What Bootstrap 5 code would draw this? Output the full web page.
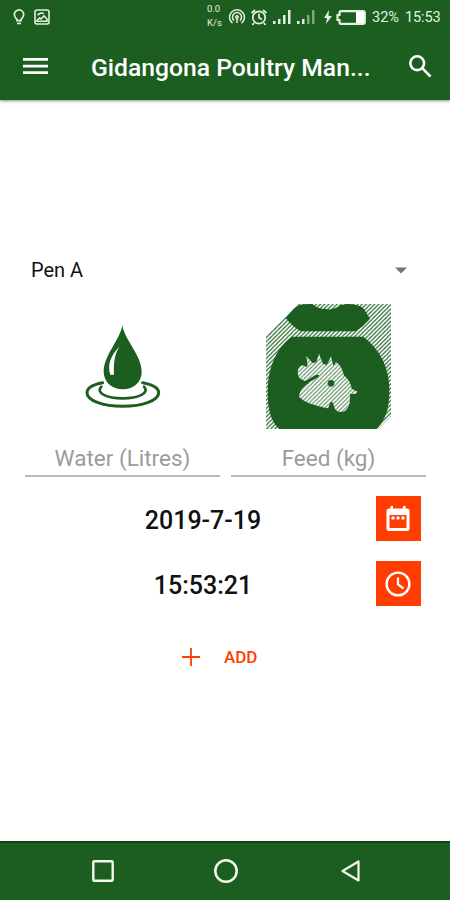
<!DOCTYPE html>
<html lang="en">
<head>
<meta charset="utf-8">
<meta name="viewport" content="width=device-width, initial-scale=1">
<title>Gidangona Poultry Manager</title>
<link href="https://cdn.jsdelivr.net/npm/bootstrap@5.3.0/dist/css/bootstrap.min.css" rel="stylesheet">
<style>
:root{--green:#1b5e20;--orange:#ff3d00}
body{font-family:Roboto,"Liberation Sans",sans-serif;background:#fff;color:#111;height:900px;overflow:hidden}
svg{display:block;flex:none}
.bg-green{background:var(--green);color:#fff}
.app-head{height:100px;box-shadow:0 1px 3px rgba(0,0,0,.45)}
.status{height:34px;padding:0 9px 0 12px;color:#e4eee2}
.speed{font-size:9.5px;line-height:14px;width:17px;height:30px;margin-right:4px}
.pct{font-size:14.5px;line-height:37px;width:28px;margin-left:6px;white-space:nowrap}
.clock{font-size:14.5px;line-height:37px;width:36px;margin-left:5px;letter-spacing:-.1px;white-space:nowrap}
.toolbar{height:66px;padding:0 17px 2px 23px}
.app-title{font-size:24.7px;font-weight:500;line-height:30px;width:300px;margin:3px 0 0 43px;white-space:nowrap}
.pen{margin-top:150px;height:40px;padding:0 43px 0 31px;font-size:20px}
.arts{height:125px;margin-top:14px}
.art-water{padding-left:5px}
.fields{gap:11px}
.field{width:195px;height:47px;margin-top:1px;border:0;border-bottom:2px solid #b9b9b9;border-radius:0;padding:11px 0 0 1px;font-size:22.5px;line-height:32px;text-align:center}
.field::placeholder{color:#9b9b9b;opacity:1}
.stamps{margin-top:19px;gap:20px}
.stamp{height:45px;padding:0 29px 0 30px}
.stamp-text{font-size:25px;font-weight:500;line-height:49px;width:346px;text-align:center}
.sq{width:45px;height:45px;border-radius:0;padding:0 2px 0 0;background:var(--orange)!important}
.add{color:var(--orange)!important;font-size:17px;font-weight:500;line-height:26px;margin:37px 0 0 181px}
.nav-foot{height:59px;border-top:2px solid #0d4511;padding:0 90px 2px 92px}
</style>
<script src="https://cdn.jsdelivr.net/npm/bootstrap@5.3.0/dist/js/bootstrap.bundle.min.js"></script>
</head>
<body class="d-flex flex-column">
<header class="app-head bg-green">
  <div class="status d-flex align-items-center">
    <svg width="14" height="18" viewBox="0 0 14 18" fill="none" stroke="currentColor" stroke-width="1.7"><path d="M5 11.500C2.800 9.500 2.300 8.500 2.300 6.600a4.700 4.700 0 0 1 9.400 0c0 1.900-.5 2.900-2.700 4.900v1.200H5zM5 15.300h4"/></svg>
    <svg class="ms-2" width="16" height="16" viewBox="0 0 16 16" fill="none" stroke="currentColor" stroke-width="1.600"><rect x="1" y="1" width="14" height="14" rx="2"/><path d="M3 12.200h10V10L10 7l-3 3-1.500-1L3 11.500zM3.500 6L6.500 4 10 4.500"/></svg>
    <div class="speed ms-auto">0.0<br>K/s</div>
    <svg width="18" height="18" viewBox="0 0 18 18" fill="none" stroke="currentColor" stroke-width="1.500"><path d="M4.500 15.200a7.500 7.500 0 1 1 9 0M6.200 12.500a4.500 4.500 0 1 1 5.600 0"/><circle cx="9" cy="9" r="1.300"/><path d="M9 10v5"/></svg>
    <svg class="ms-1" width="18" height="18" viewBox="0 0 18 18" fill="none" stroke="currentColor" stroke-width="1.700"><circle cx="9" cy="9.500" r="6.200"/><path d="M9 5.500v4.200l3 1.700M1.500 5L5 2M16.500 5L13 2M4 15l-1.500 2M14 15l1.500 2"/></svg>
    <svg class="ms-1" width="20" height="16" viewBox="0 0 20 16" fill="currentColor"><path d="M1 12h2.500v3H1zM6 10h2.500v5H6zM11 6h2.500v9H11zM16 1h2.500v14H16z"/></svg>
    <svg class="ms-1" width="20" height="16" viewBox="0 0 20 16" fill="currentColor"><path d="M1 12h2.500v3H1zM6 10h2.500v5H6z"/><path opacity=".5" d="M11 6h2.500v9H11zM16 1h2.500v14H16z"/></svg>
    <svg class="ms-2" width="8" height="14" viewBox="0 0 8 14" fill="currentColor"><path d="M5 0L0 8h3l-1 6 6-8H4.500z"/></svg>
    <svg class="ms-1" width="30" height="15" viewBox="0 0 30 15"><path d="M5 1.200h22q1.800 0 1.800 1.800v9q0 1.800-1.800 1.800H5Q3.500 13.800 3.500 12V10H1.500V5h2V3Q3.500 1.200 5 1.200z" fill="none" stroke="currentColor" stroke-width="2.200"/><path d="M20 2h8v11h-8z" fill="#fff"/></svg>
    <span class="pct">32%</span><span class="clock">15:53</span>
  </div>
  <div class="toolbar d-flex align-items-center">
    <svg width="25" height="18" viewBox="0 0 25 18" fill="#fff"><path d="M0 1h25v2.800H0zM0 7.700h25v2.800H0zM0 14.300h25v2.800H0z"/></svg>
    <div class="app-title">Gidangona Poultry Man...</div>
    <svg class="ms-auto" width="25" height="25" viewBox="0 0 25 25" fill="none" stroke="#fff" stroke-width="2.600"><circle cx="9.200" cy="9.200" r="6.900"/><path d="M14.200 14.200l8.300 8.300"/></svg>
  </div>
</header>
<main class="flex-grow-1">
  <div class="pen d-flex align-items-center justify-content-between">
    <span>Pen A</span>
    <svg width="12" height="7" viewBox="0 0 12 7"><path d="M0 .5h12L6 6.500z" fill="#757575"/></svg>
  </div>
  <div class="fields d-flex justify-content-center">
    <div>
      <div class="arts art-water d-flex justify-content-center">
        <svg width="110" height="125" viewBox="0 -18 330 375">
          <path d="M157 46C163 88 215 137 215 185C215 218 188 238 158 238C127 238 101 216 101 185C101 137 151 88 157 46Z" fill="#1b5e20"/>
          <path d="M149 109C120 139 112 166 121 194H132C130 160 134 132 149 109Z" fill="#fff"/>
          <g fill="none" stroke="#1b5e20" stroke-linecap="round"><path d="M98 218C66 224 51 235 51 248C51 271 98 289 158 289S266 271 266 248C266 235 249 224 218 218" stroke-width="9"/><path d="M94 230C76 249 110 265 158 265S240 249 222 230" stroke-width="8"/></g>
        </svg>
      </div>
      <input class="form-control field" placeholder="Water (Litres)" aria-label="Water">
    </div>
    <div>
      <div class="arts d-flex justify-content-center">
        <svg width="125" height="125" viewBox="33 28 375 375">
          <defs>
            <pattern id="hatch" width="12.500" height="12.500" patternUnits="userSpaceOnUse"><path d="M-3 3L3-3M-1 13.500L13.500-1M9.500 15.500L15.500 9.500" stroke="#1b5e20" stroke-width="3.300"/></pattern>
            <path id="hen" d="M134 251C125 235 126 217 143 212L154 217L158 211L154 184L173 206L184 203L192 177L204 208L216 211L228 185L235 214L243 202C257 211 263 227 267 243C281 252 288 268 290 282L307 291L302 298L284 297C286 314 286 336 270 349C252 356 237 349 235 324L227 321L219 341C186 333 151 326 132 306C133 291 144 277 157 269L165 261L190 248L193 240L181 241L162 253L149 259Z"/>
          </defs>
          <path d="M33 124L129 28H408V365L370 403H33Z" fill="url(#hatch)"/>
          <path d="M92 70L116 43Q129 31 146 29L172 28Q186 42 216 44Q240 46 256 32L275 28Q312 28 327 43L345 72Q327 94 302 110H138Q112 96 92 70Z" fill="#1b5e20"/>
          <path d="M110 126H325C378 166 403 222 403 286C403 338 394 373 365 403H73C48 382 38 345 38 292C38 225 60 163 110 126Z" fill="#1b5e20"/>
          <use href="#hen" fill="#fff"/>
          <use href="#hen" fill="url(#hatch)" fill-opacity=".7"/>
          <circle cx="228" cy="266" r="10" fill="#1b5e20"/>
        </svg>
      </div>
      <input class="form-control field" placeholder="Feed (kg)" aria-label="Feed">
    </div>
  </div>
  <div class="stamps d-flex flex-column">
    <div class="stamp d-flex">
      <div class="stamp-text">2019-7-19</div>
      <button class="btn sq d-flex align-items-center justify-content-center" aria-label="Pick date">
        <svg width="24" height="27" viewBox="0 0 24 27"><path d="M3 3.500h18q2.500 0 2.500 2.500v17.500q0 2.500-2.500 2.500H3Q.5 26 .5 23.500V6Q.5 3.500 3 3.500zM3.500 10v12.900h17V10z" fill="#fff" fill-rule="evenodd"/><path d="M4.500 1H7v4H4.500zM17 1h2.500v4H17zM5.500 11.500h3v3h-3zM10.500 11.500h3v3h-3zM15.500 11.500h3v3h-3z" fill="#fff"/></svg>
      </button>
    </div>
    <div class="stamp d-flex">
      <div class="stamp-text">15:53:21</div>
      <button class="btn sq d-flex align-items-center justify-content-center" aria-label="Pick time">
        <svg width="26" height="26" viewBox="0 0 26 26" fill="none" stroke="#fff" stroke-width="2.400"><circle cx="13" cy="13" r="11.400"/><path d="M13 6.500v7l5.500 4" stroke-width="2.200"/></svg>
      </button>
    </div>
  </div>
  <button class="btn add d-flex align-items-center p-0">
    <svg width="18" height="18" viewBox="0 0 18 18"><path d="M9 0v18M0 9h18" stroke="#ff3d00" stroke-width="1.800"/></svg>
    <span class="ms-4">ADD</span>
  </button>
</main>
<footer class="nav-foot bg-green d-flex align-items-center justify-content-between">
  <svg width="22" height="22" viewBox="0 0 22 22"><rect x="1.300" y="1.300" width="19.400" height="19.400" rx="1" fill="none" stroke="#f3f8ee" stroke-width="2.400"/></svg>
  <svg class="me-1" width="24" height="24" viewBox="0 0 24 24"><circle cx="12" cy="12" r="10.700" fill="none" stroke="#f3f8ee" stroke-width="2.500"/></svg>
  <svg width="19" height="22" viewBox="0 0 19 22"><path d="M17.500 1.500v19L1.500 11z" fill="none" stroke="#f3f8ee" stroke-width="2.200" stroke-linejoin="round"/></svg>
</footer>
</body>
</html>
